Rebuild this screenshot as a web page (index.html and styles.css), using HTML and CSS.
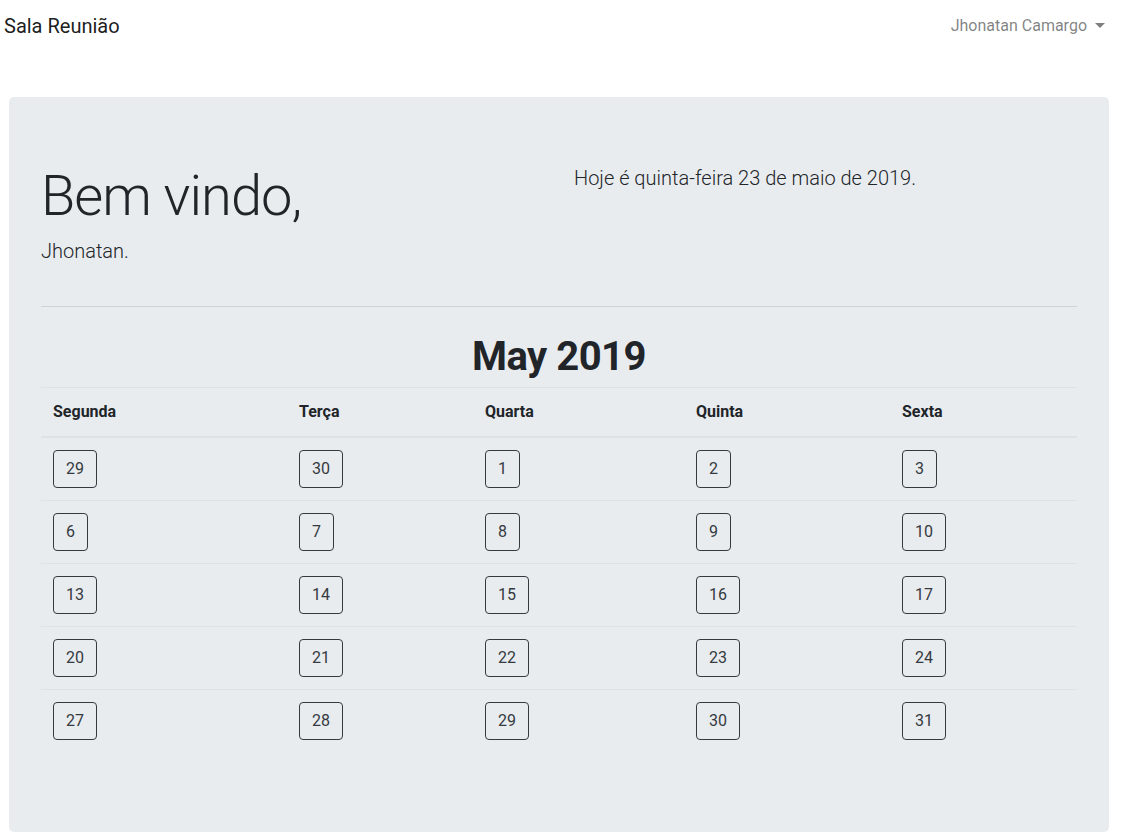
FILE: index.html
```html
<!DOCTYPE html>
<html lang="pt-BR">
<head>
<meta charset="utf-8">
<title>Sala Reunião</title>
<link rel="stylesheet" href="styles.css">
</head>
<body>
<nav class="navbar">
  <a class="brand" href="#">Sala Reunião</a>
  <a class="user-link" href="#">Jhonatan Camargo<span class="caret"></span></a>
</nav>
<main class="jumbotron">
  <div class="row">
    <div class="col">
      <h1 class="display">Bem vindo,</h1>
      <p class="lead">Jhonatan.</p>
    </div>
    <div class="col">
      <p class="lead">Hoje é quinta-feira 23 de maio de 2019.</p>
    </div>
  </div>
  <hr class="divider">
  <h1 class="month">May 2019</h1>
  <table class="calendar">
    <thead>
      <tr>
        <th class="c1">Segunda</th>
        <th class="c2">Terça</th>
        <th class="c3">Quarta</th>
        <th class="c4">Quinta</th>
        <th class="c5">Sexta</th>
      </tr>
    </thead>
    <tbody>
      <tr><td><button class="day">29</button></td><td><button class="day">30</button></td><td><button class="day">1</button></td><td><button class="day">2</button></td><td><button class="day">3</button></td></tr>
      <tr><td><button class="day">6</button></td><td><button class="day">7</button></td><td><button class="day">8</button></td><td><button class="day">9</button></td><td><button class="day">10</button></td></tr>
      <tr><td><button class="day">13</button></td><td><button class="day">14</button></td><td><button class="day">15</button></td><td><button class="day">16</button></td><td><button class="day">17</button></td></tr>
      <tr><td><button class="day">20</button></td><td><button class="day">21</button></td><td><button class="day">22</button></td><td><button class="day">23</button></td><td><button class="day">24</button></td></tr>
      <tr><td><button class="day">27</button></td><td><button class="day">28</button></td><td><button class="day">29</button></td><td><button class="day">30</button></td><td><button class="day">31</button></td></tr>
    </tbody>
  </table>
</main>
</body>
</html>
```
FILE: styles.css
```css
* { box-sizing: border-box; }
html, body {
  margin: 0;
  padding: 0;
  background: #fff;
  font-family: Roboto, "Noto Sans", "Liberation Sans", sans-serif;
  font-size: 16px;
  line-height: 1.5;
  color: #212529;
}
.navbar {
  height: 52px;
  display: flex;
  align-items: center;
  justify-content: space-between;
  padding: 0 16px 0 4px;
}
.brand {
  font-size: 20px;
  line-height: 30px;
  color: rgba(0,0,0,.9);
  text-decoration: none;
}
.user-link {
  font-size: 16px;
  line-height: 24px;
  color: rgba(0,0,0,.5);
  text-decoration: none;
  display: inline-flex;
  align-items: center;
}
.caret {
  display: inline-block;
  margin-left: 8px;
  width: 0;
  height: 0;
  border-top: 5px solid rgba(0,0,0,.5);
  border-left: 5px solid transparent;
  border-right: 5px solid transparent;
  margin-top: -2px;
}
.jumbotron {
  display: block;
  margin: 45px 12px 0 9px;
  padding: 64px 32px;
  background: #e9ecef;
  border-radius: 5px;
}
.row {
  display: flex;
}
.col {
  flex: 0 0 50%;
  max-width: 50%;
}
.col + .col { padding-left: 15px; }
.display {
  margin: 0 0 8px;
  padding-top: 3px;
  font-size: 56px;
  font-weight: 300;
  line-height: 64px;
  letter-spacing: -1px;
}
.lead {
  margin: 0 0 16px;
  font-size: 20px;
  font-weight: 300;
  line-height: 30px;
}
.col + .col .lead { padding-top: 2px; }
.divider {
  margin: 24px 0;
  border: 0;
  border-top: 1px solid rgba(0,0,0,.1);
  height: 0;
}
.month {
  margin: 0 0 8px;
  padding-top: 3px;
  text-align: center;
  font-size: 40px;
  font-weight: 700;
  line-height: 45px;
  letter-spacing: -0.5px;
}
.calendar {
  width: 100%;
  border-collapse: collapse;
  table-layout: fixed;
  margin-bottom: 16px;
}
.calendar th, .calendar td {
  padding: 12px;
  text-align: left;
  vertical-align: top;
  border-top: 1px solid #dee2e6;
}
.calendar th {
  font-weight: 700;
  line-height: 24px;
  border-bottom: 2px solid #dee2e6;
}
.c1 { width: 246px; }
.c2 { width: 186px; }
.c3 { width: 211px; }
.c4 { width: 206px; }
.c5 { width: 187px; }
.day {
  display: inline-block;
  font-family: inherit;
  font-size: 16px;
  line-height: 24px;
  padding: 6px 12px;
  color: #343a40;
  background: transparent;
  border: 1px solid #343a40;
  border-radius: 4px;
  cursor: pointer;
}
```
